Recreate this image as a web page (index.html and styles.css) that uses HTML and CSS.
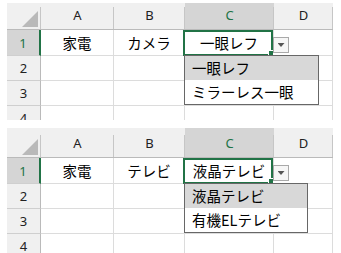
FILE: index.html
```html
<!DOCTYPE html>
<html lang="ja">
<head>
<meta charset="utf-8">
<title>Excel dropdown</title>
<link rel="stylesheet" href="styles.css">
</head>
<body>
<div class="shot shot-1">
  <div class="sheet">
    <div class="corner"><span class="tri"></span></div>
    <div class="colhdr">A</div>
    <div class="colhdr">B</div>
    <div class="colhdr sel">C</div>
    <div class="colhdr">D</div>

    <div class="rowhdr sel">1</div>
    <div class="cell">家電</div>
    <div class="cell">カメラ</div>
    <div class="cell active">一眼レフ
      <span class="frame"></span>
      <span class="handle"></span>
      <span class="ddbtn"><span class="arrow"></span></span>
      <ul class="ddlist w1">
        <li class="hi">一眼レフ</li>
        <li>ミラーレス一眼</li>
      </ul>
    </div>
    <div class="cell"></div>

    <div class="rowhdr">2</div>
    <div class="cell"></div><div class="cell"></div><div class="cell"></div><div class="cell"></div>
    <div class="rowhdr">3</div>
    <div class="cell"></div><div class="cell"></div><div class="cell"></div><div class="cell"></div>
    <div class="rowhdr">4</div>
    <div class="cell"></div><div class="cell"></div><div class="cell"></div><div class="cell"></div>
  </div>
</div>

<div class="shot shot-2">
  <div class="sheet">
    <div class="corner"><span class="tri"></span></div>
    <div class="colhdr">A</div>
    <div class="colhdr">B</div>
    <div class="colhdr sel">C</div>
    <div class="colhdr">D</div>

    <div class="rowhdr sel">1</div>
    <div class="cell">家電</div>
    <div class="cell">テレビ</div>
    <div class="cell active">液晶テレビ
      <span class="frame"></span>
      <span class="handle"></span>
      <span class="ddbtn"><span class="arrow"></span></span>
      <ul class="ddlist w2">
        <li class="hi">液晶テレビ</li>
        <li>有機ELテレビ</li>
      </ul>
    </div>
    <div class="cell"></div>

    <div class="rowhdr">2</div>
    <div class="cell"></div><div class="cell"></div><div class="cell"></div><div class="cell"></div>
    <div class="rowhdr">3</div>
    <div class="cell"></div><div class="cell"></div><div class="cell"></div><div class="cell"></div>
    <div class="rowhdr">4</div>
    <div class="cell"></div><div class="cell"></div><div class="cell"></div><div class="cell"></div>
  </div>
</div>
</body>
</html>
```

FILE: styles.css
```css
* { box-sizing: border-box; }

body {
  margin: 0;
  background: #fff;
  font-family: "Noto Sans", "Noto Sans CJK JP", sans-serif;
  color: #000;
}

.shot {
  margin-left: 7px;
  width: 326px;
  overflow: hidden;
}

.shot-1 {
  margin-top: 3px;
  height: 117px;
}

.shot-1 .sheet {
  margin-top: -3px;
}

.shot-2 {
  margin-top: 8px;
  height: 125px;
}

.sheet {
  display: grid;
  grid-template-columns: 34px 73px 71px 89px 59px;
  grid-template-rows: 30px 26px 25px 25px 25px;
}

.corner,
.colhdr {
  background: linear-gradient(#c6c6c6, #c6c6c6) right bottom / 1px calc(100% - 7px) no-repeat, #f0f0f0;
  border-bottom: 1px solid #bababa;
}

.corner {
  display: flex;
  align-items: flex-end;
  justify-content: flex-end;
  padding: 0 3px 2px 0;
}

.tri {
  display: block;
  width: 16px;
  height: 16px;
  background: #b9b9b9;
  clip-path: polygon(100% 0, 100% 100%, 0 100%);
}

.colhdr {
  display: flex;
  align-items: center;
  justify-content: center;
  font-size: 13px;
  color: #222;
}

.colhdr.sel {
  background-color: #d5d5d5;
  color: #217346;
}

.rowhdr {
  display: flex;
  align-items: center;
  justify-content: center;
  background: #f0f0f0;
  border-right: 1px solid #bababa;
  border-bottom: 1px solid #cfcfcf;
  font-size: 13px;
  color: #222;
}

.rowhdr.sel {
  background: #d5d5d5;
  border-right: 2px solid #217346;
  color: #217346;
}

.cell {
  display: flex;
  align-items: center;
  justify-content: center;
  border-right: 1px solid #dcdcdc;
  border-bottom: 1px solid #dcdcdc;
  font-family: "Noto Sans CJK JP", sans-serif;
  font-size: 14.5px;
  white-space: nowrap;
  background: #fff;
}

.active {
  position: relative;
}

.frame {
  position: absolute;
  top: 0;
  left: -2px;
  right: 0;
  bottom: -1px;
  border: 2px solid #217346;
}

.handle {
  position: absolute;
  right: -1px;
  bottom: -1px;
  width: 6px;
  height: 6px;
  background: #217346;
  border: 1px solid #fff;
}

.ddbtn {
  position: absolute;
  left: 100%;
  top: 7px;
  width: 16px;
  height: 16px;
  border: 1px solid #a9a9a9;
  background: #f6f6f6;
  display: flex;
  align-items: center;
  justify-content: center;
  z-index: 2;
}

.arrow {
  display: block;
  width: 7px;
  height: 4px;
  background: #555;
  clip-path: polygon(0 0, 100% 0, 50% 100%);
}

.ddlist {
  position: absolute;
  left: -1px;
  top: 100%;
  margin: 0;
  padding: 0;
  list-style: none;
  border: 1px solid #676767;
  background: #fff;
  z-index: 3;
}

.ddlist.w1 { width: 135px; }
.ddlist.w2 { width: 124px; }

.ddlist li {
  height: 24px;
  line-height: 24px;
  padding-left: 7px;
  font-size: 14.5px;
  white-space: nowrap;
}

.ddlist li.hi {
  background: #d8d8d8;
}
```
